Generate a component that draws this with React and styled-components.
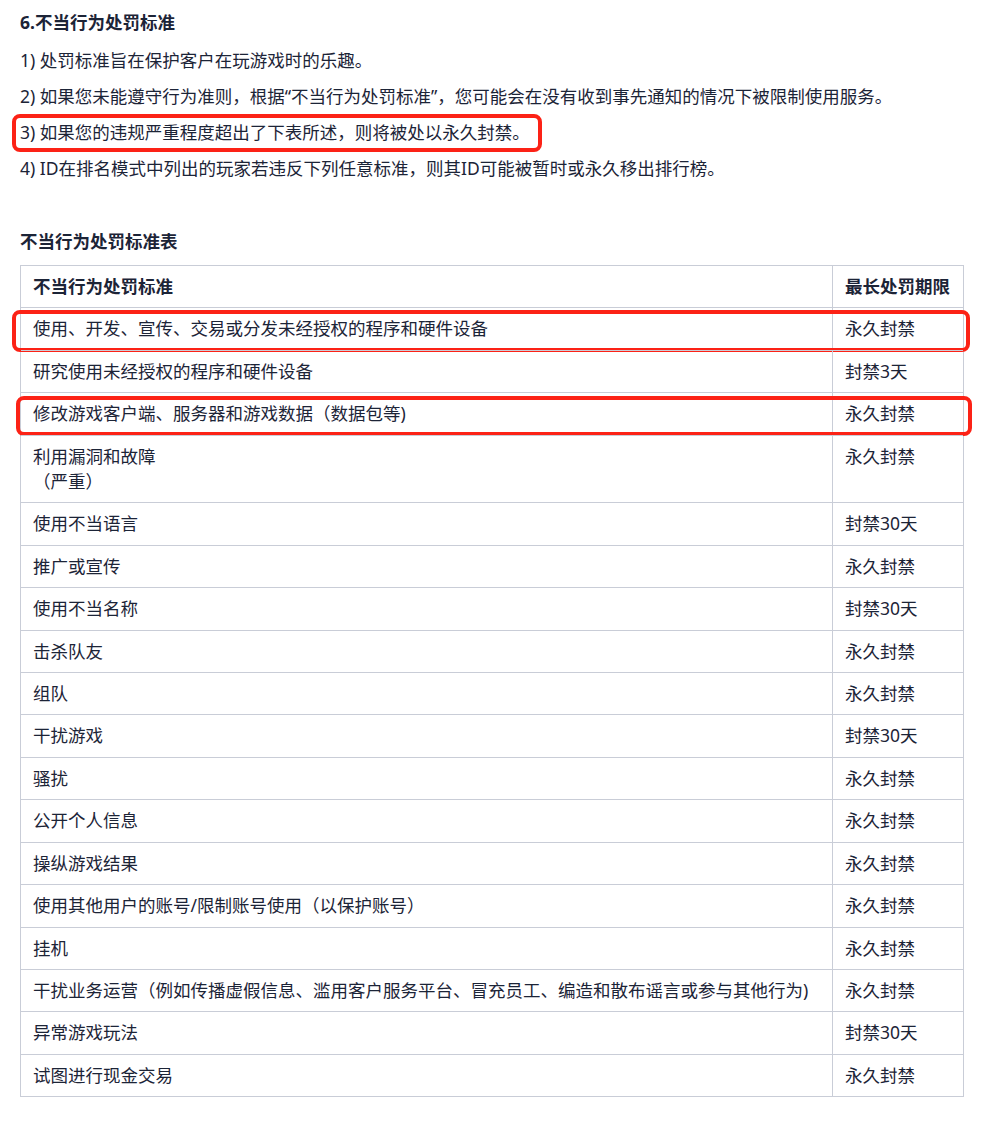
import styled, { createGlobalStyle } from "styled-components";

const GlobalStyle = createGlobalStyle`
  body {
    margin: 0;
    background: #fff;
    color: #1c2437;
    font-family: "Noto Sans", "Noto Sans CJK SC", sans-serif;
  }
`;

const Page = styled.div`
  width: 1000px;
  box-sizing: border-box;
  padding: 4px 36px 40px 20px;
  font-size: 17.5px;
`;

const Heading = styled.h3`
  margin: 0;
  font-size: 17.5px;
  line-height: 36px;
  font-weight: 700;
`;

const Para = styled.p`
  margin: ${({ first }) => (first ? "2px" : "0")} 0 0;
  line-height: 36px;
`;

const Marked = styled.span`
  position: relative;
  display: inline-block;
`;

// red frame drawn over the content
const Frame = styled.span`
  position: absolute;
  top: ${({ t }) => t}px;
  bottom: ${({ b }) => b}px;
  left: ${({ l }) => l}px;
  right: ${({ r }) => r}px;
  border: 4.5px solid #fc2216;
  border-radius: 8px;
  pointer-events: none;
`;

const SubHeading = styled(Heading)`
  margin-top: 37px;
`;

const Table = styled.div`
  margin-top: 6px;
  border: 1px solid #c9cdd7;
`;

const Row = styled.div`
  position: relative;
  display: grid;
  grid-template-columns: 1fr 130px;
  border-top: ${({ head }) => (head ? "none" : "1px solid #c9cdd7")};
  font-weight: ${({ head }) => (head ? 700 : 400)};
`;

const Cell = styled.div`
  padding: 8px 12px 8px 12px;
  line-height: 25.4px;
  white-space: pre-line;
  border-right: ${({ last }) => (last ? "none" : "1px solid #c9cdd7")};
`;

const rows = [
  ["使用、开发、宣传、交易或分发未经授权的程序和硬件设备", "永久封禁", { t: 2, b: -2, l: -9, r: -7 }],
  ["研究使用未经授权的程序和硬件设备", "封禁3天"],
  ["修改游戏客户端、服务器和游戏数据（数据包等)", "永久封禁", { t: 3, b: -1, l: -5, r: -9 }],
  ["利用漏洞和故障\n（严重）", "永久封禁"],
  ["使用不当语言", "封禁30天"],
  ["推广或宣传", "永久封禁"],
  ["使用不当名称", "封禁30天"],
  ["击杀队友", "永久封禁"],
  ["组队", "永久封禁"],
  ["干扰游戏", "封禁30天"],
  ["骚扰", "永久封禁"],
  ["公开个人信息", "永久封禁"],
  ["操纵游戏结果", "永久封禁"],
  ["使用其他用户的账号/限制账号使用（以保护账号）", "永久封禁"],
  ["挂机", "永久封禁"],
  ["干扰业务运营（例如传播虚假信息、滥用客户服务平台、冒充员工、编造和散布谣言或参与其他行为)", "永久封禁"],
  ["异常游戏玩法", "封禁30天"],
  ["试图进行现金交易", "永久封禁"],
];

export default function App() {
  return (
    <Page>
      <GlobalStyle />
      <Heading>6.不当行为处罚标准</Heading>
      <Para first>1) 处罚标准旨在保护客户在玩游戏时的乐趣。</Para>
      <Para>2) 如果您未能遵守行为准则，根据“不当行为处罚标准”，您可能会在没有收到事先通知的情况下被限制使用服务。</Para>
      <Para>
        <Marked>
          3) 如果您的违规严重程度超出了下表所述，则将被处以永久封禁。
          <Frame t={0} b={-2} l={-8} r={-12} />
        </Marked>
      </Para>
      <Para>4) ID在排名模式中列出的玩家若违反下列任意标准，则其ID可能被暂时或永久移出排行榜。</Para>

      <SubHeading>不当行为处罚标准表</SubHeading>
      <Table>
        <Row head>
          <Cell>不当行为处罚标准</Cell>
          <Cell last>最长处罚期限</Cell>
        </Row>
        {rows.map(([what, term, frame]) => (
          <Row key={what}>
            <Cell>{what}</Cell>
            <Cell last>{term}</Cell>
            {frame && <Frame {...frame} />}
          </Row>
        ))}
      </Table>
    </Page>
  );
}
